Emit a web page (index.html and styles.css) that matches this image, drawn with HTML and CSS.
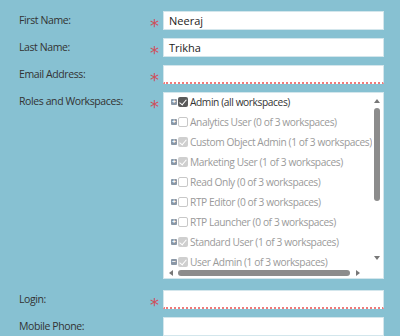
FILE: index.html
```html
<!DOCTYPE html>
<html lang="en">

<head>
  <meta charset="UTF-8">
  <title>User Details</title>
  <link rel="stylesheet" href="styles.css">
</head>

<body>
  <form class="user-form">
    <label class="field-label">First Name:</label>
    <span class="required">*</span>
    <div class="text-field">Neeraj</div>

    <label class="field-label">Last Name:</label>
    <span class="required">*</span>
    <div class="text-field">Trikha</div>

    <label class="field-label">Email Address:</label>
    <span class="required">*</span>
    <div class="text-field invalid"></div>

    <label class="field-label">Roles and Workspaces:</label>
    <span class="required">*</span>
    <div class="role-box">
      <div class="role-list">
        <div class="role-item active">
          <span class="expander">+</span>
          <span class="check on"></span>
          <span class="role-name">Admin (all workspaces)</span>
        </div>
        <div class="role-item">
          <span class="expander">+</span>
          <span class="check"></span>
          <span class="role-name">Analytics User (0 of 3 workspaces)</span>
        </div>
        <div class="role-item">
          <span class="expander">+</span>
          <span class="check partial"></span>
          <span class="role-name">Custom Object Admin (1 of 3 workspaces)</span>
        </div>
        <div class="role-item">
          <span class="expander">+</span>
          <span class="check partial"></span>
          <span class="role-name">Marketing User (1 of 3 workspaces)</span>
        </div>
        <div class="role-item">
          <span class="expander">+</span>
          <span class="check"></span>
          <span class="role-name">Read Only (0 of 3 workspaces)</span>
        </div>
        <div class="role-item">
          <span class="expander">+</span>
          <span class="check"></span>
          <span class="role-name">RTP Editor (0 of 3 workspaces)</span>
        </div>
        <div class="role-item">
          <span class="expander">+</span>
          <span class="check"></span>
          <span class="role-name">RTP Launcher (0 of 3 workspaces)</span>
        </div>
        <div class="role-item">
          <span class="expander">+</span>
          <span class="check partial"></span>
          <span class="role-name">Standard User (1 of 3 workspaces)</span>
        </div>
        <div class="role-item">
          <span class="expander">&minus;</span>
          <span class="check partial"></span>
          <span class="role-name">User Admin (1 of 3 workspaces)</span>
        </div>
      </div>
      <div class="vscroll">
        <span class="arrow up"></span>
        <span class="thumb"></span>
        <span class="arrow down"></span>
      </div>
      <div class="hscroll">
        <span class="arrow left"></span>
        <span class="thumb"></span>
        <span class="arrow right"></span>
      </div>
    </div>

    <label class="field-label login-label">Login:</label>
    <span class="required login-label">*</span>
    <div class="text-field invalid login-field"></div>

    <label class="field-label">Mobile Phone:</label>
    <span></span>
    <div class="text-field"></div>
  </form>
</body>

</html>
```

FILE: styles.css
```css
* {
  box-sizing: border-box;
}

body {
  margin: 0;
  padding: 11px 16px 0 19px;
  background: #87c1d2;
  font-family: 'Open Sans', 'Noto Sans', sans-serif;
  font-size: 10.5px;
  letter-spacing: -0.4px;
  color: #333;
}

.user-form {
  display: grid;
  grid-template-columns: 127px 17px 221px;
  row-gap: 8px;
  align-items: start;
}

.field-label {
  line-height: 18px;
}

.required {
  color: #cf4f5c;
  font-size: 18px;
  line-height: 29px;
  height: 19px;
  text-align: center;
  letter-spacing: 0;
  font-family: 'DejaVu Sans', sans-serif;
}

.text-field {
  height: 19px;
  background: #fff;
  border: 1px solid #d3e6ec;
  padding: 0 5px;
  line-height: 17px;
  font-size: 11px;
  letter-spacing: 0;
  color: #222;
}

.text-field.invalid {
  border-bottom: 2px dotted #f07a7a;
}

.login-label,
.login-field {
  margin-top: 3px;
}

/* roles tree */
.role-box {
  height: 187px;
  background: #fff;
  border: 1px solid #d3e6ec;
  display: grid;
  grid-template-columns: 1fr 11px;
  grid-template-rows: 1fr 10px;
  overflow: hidden;
}

.role-list {
  overflow: hidden;
  padding-left: 7px;
  margin-top: -1px;
  white-space: nowrap;
  font-size: 10.2px;
  letter-spacing: -0.4px;
}

.role-item {
  display: flex;
  align-items: center;
  height: 20px;
  color: #9a9a9a;
}

.role-item.active {
  color: #333;
}

.expander {
  flex-shrink: 0;
  width: 6px;
  height: 6px;
  background: #8a97a6;
  color: #fff;
  font-size: 7px;
  line-height: 6px;
  text-align: center;
  font-weight: bold;
  letter-spacing: 0;
  margin-right: 1px;
  border-radius: 1px;
}

.check {
  flex-shrink: 0;
  width: 10px;
  height: 10px;
  border: 1px solid #c8c8c8;
  border-radius: 2px;
  margin-right: 2px;
  position: relative;
  background: #fff;
}

.check.on,
.check.partial {
  border: none;
}

.check.on {
  background: #5a5a5a;
}

.check.partial {
  background: #cfcfcf;
}

.check.on::after,
.check.partial::after {
  content: '';
  position: absolute;
  left: 3px;
  top: 1px;
  width: 3px;
  height: 6px;
  border: solid #fff;
  border-width: 0 1.5px 1.5px 0;
  transform: rotate(40deg);
}

/* scrollbars */
.vscroll {
  display: flex;
  flex-direction: column;
  align-items: center;
  padding: 6px 1px 8px 0;
}

.vscroll .thumb {
  width: 6px;
  height: 93px;
  background: #8c8c8c;
  border-radius: 3px;
  margin-top: 5px;
}

.hscroll {
  display: flex;
  align-items: center;
  padding: 0 6px 0 5px;
}

.hscroll .thumb {
  width: 172px;
  height: 6px;
  background: #8c8c8c;
  border-radius: 3px;
  margin: 0 6px 0 5px;
}

.arrow {
  width: 0;
  height: 0;
  border: 3px solid transparent;
}

.arrow.up {
  border-bottom: 4px solid #777;
  border-top: none;
}

.arrow.down {
  border-top: 4px solid #777;
  border-bottom: none;
  margin-top: auto;
}

.arrow.left {
  border-right: 4px solid #777;
  border-left: none;
}

.arrow.right {
  border-left: 4px solid #777;
  border-right: none;
}
```
